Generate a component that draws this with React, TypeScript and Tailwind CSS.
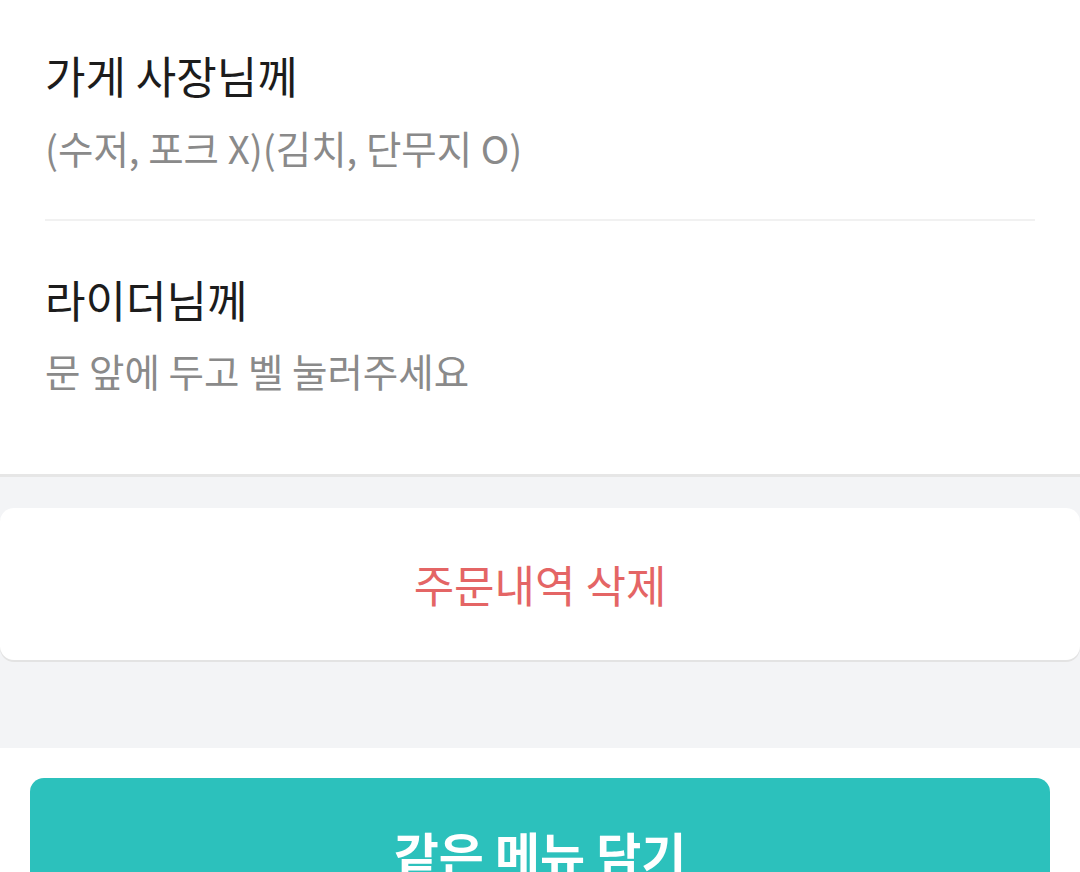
export default function App() {
  const font = { fontFamily: '"Noto Sans CJK KR", "Noto Sans", sans-serif' };
  return (
    <div className="w-[1080px] h-[872px] overflow-hidden bg-white" style={font}>
      <div className="bg-white px-[45px] border-b-[3px] border-[#e6e6e6]">
        <div className="pt-[49px] pb-[48px]">
          <div className="text-[44px] leading-[52px] text-[#1c1c1c]">가게 사장님께</div>
          <div className="mt-[23px] text-[38.5px] leading-[47px] text-[#8a8a8a]">(수저, 포크 X)(김치, 단무지 O)</div>
        </div>
        <div className="h-[2px] bg-[#f1f1f1]" />
        <div className="pt-[52px] pb-[80px]">
          <div className="text-[44px] leading-[52px] text-[#1c1c1c]">라이더님께</div>
          <div className="mt-[22px] text-[38.5px] leading-[47px] text-[#8a8a8a]">문 앞에 두고 벨 눌러주세요</div>
        </div>
      </div>
      <div className="bg-[#f3f4f6] pt-[31px] pb-[88px]">
        <div className="h-[152px] bg-white rounded-[14px] shadow-[0_2px_0_#e3e3e3] flex items-center justify-center">
          <span className="text-[44px] leading-[52px] text-[#e46565]">주문내역 삭제</span>
        </div>
      </div>
      <div className="bg-white px-[30px] pt-[30px]">
        <div className="h-[150px] rounded-[14px] bg-[#2cc1bc] flex items-center justify-center">
          <span className="text-[49px] leading-[60px] font-bold text-white">같은 메뉴 담기</span>
        </div>
      </div>
    </div>
  );
}
